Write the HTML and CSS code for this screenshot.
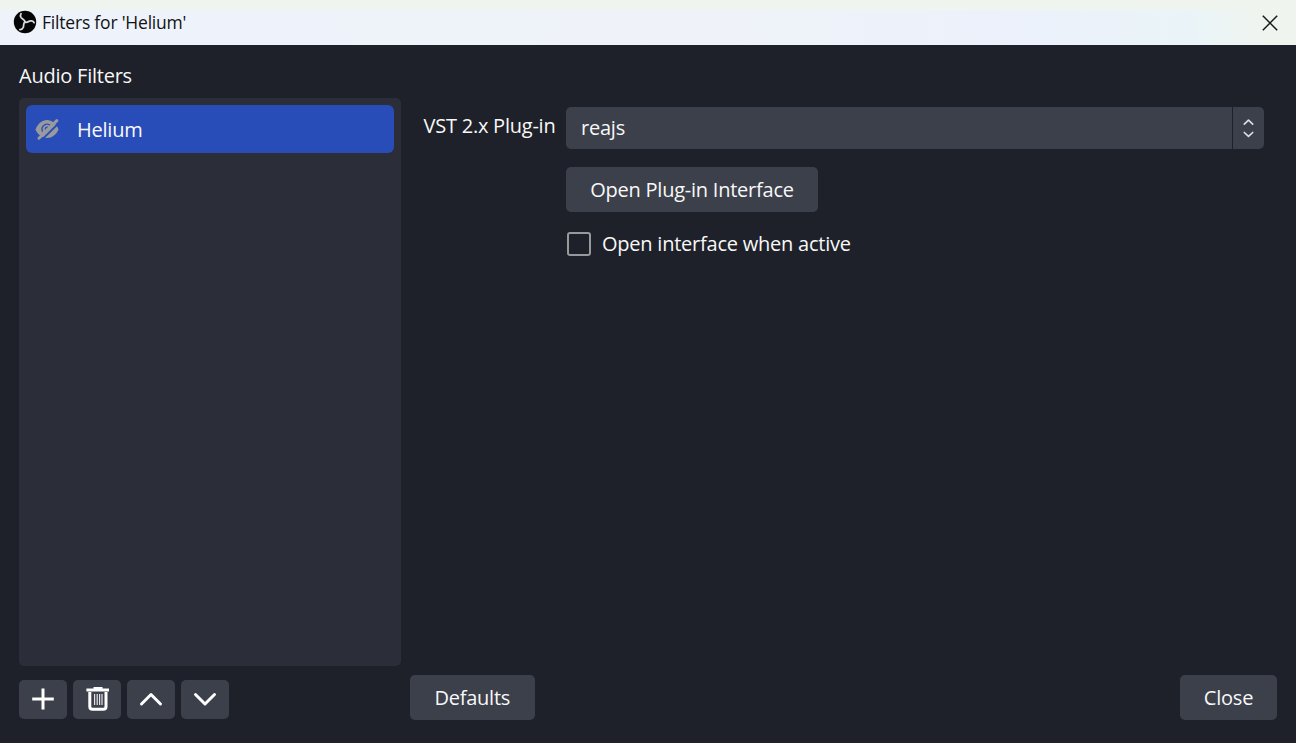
FILE: index.html
```html
<!DOCTYPE html>
<html lang="en">
<head>
<meta charset="utf-8">
<title>Filters for 'Helium'</title>
<link rel="stylesheet" href="styles.css">
</head>
<body>
<div class="window">
  <header class="titlebar">
    <svg class="logo" viewBox="0 0 24 24"><circle cx="12" cy="12" r="11.2" fill="#050506"/><g fill="none" stroke="#d5d8dd" stroke-width="1.8" stroke-linecap="round"><path d="M12 12.3C12.2 9.6 9.6 9.6 8.2 7.8C7.2 6.4 7.2 5 8 3.8"/><path d="M12 12.3C12.2 9.6 9.6 9.6 8.2 7.8C7.2 6.4 7.2 5 8 3.8" transform="rotate(120 12 12)"/><path d="M12 12.3C12.2 9.6 9.6 9.6 8.2 7.8C7.2 6.4 7.2 5 8 3.8" transform="rotate(240 12 12)"/></g></svg>
    <span class="title">Filters for 'Helium'</span>
    <svg class="dismiss" viewBox="0 0 16 16"><path d="M.8.8 15.2 15.2M15.2.8.8 15.2" fill="none" stroke="#16181b" stroke-width="1.5"/></svg>
  </header>
  <main class="content">
    <section class="sidebar">
      <h2 class="heading">Audio Filters</h2>
      <ul class="filters">
        <li class="filter">
          <svg class="eye" viewBox="0 0 24 21"><path d="M.5 10.5C3 4.5 7 1 12 1S21 4.5 23.5 10.5C21 16 17 19 12 19S3 16 .5 10.5Z" fill="#999a9d"/><path d="M7.6 12.6A5 5 0 0 1 15.6 6.8" fill="none" stroke="#284cb8" stroke-width="1.3"/><path d="M10.3 10.6A2 2 0 0 1 12.8 8.2" fill="none" stroke="#284cb8" stroke-width="1.3"/><path d="M6 21.6 24.2 3.6" stroke="#284cb8" stroke-width="1.9"/><path d="M4 19.2 21.8 1.6" stroke="#999a9d" stroke-width="3" stroke-linecap="round"/></svg>
          <span>Helium</span>
        </li>
      </ul>
      <div class="tools">
        <button class="tool" aria-label="Add"><svg viewBox="0 0 47 38"><path d="M24 8.5V29.5M13.2 19H34.8" stroke="#fefefe" stroke-width="3" fill="none"/></svg></button>
        <button class="tool" aria-label="Remove"><svg viewBox="0 0 47 38"><path d="M13.4 10H36M20.5 8.5H29.5" stroke="#fefefe" stroke-width="3" fill="none"/><path d="M16.8 12V26.5Q16.8 29.3 19.6 29.3H30.2Q33 29.3 33 26.5V12" stroke="#fefefe" stroke-width="3" fill="none"/><path d="M21.6 14V25M24.2 14V25M26.6 14V25M29 14V25" stroke="#e4e5e7" stroke-width="1.2" fill="none"/></svg></button>
        <button class="tool" aria-label="Move up"><svg viewBox="0 0 47 38"><path d="M14.5 24 24 14.5 33.5 24" stroke="#fefefe" stroke-width="3" stroke-linecap="round" stroke-linejoin="round" fill="none"/></svg></button>
        <button class="tool" aria-label="Move down"><svg viewBox="0 0 47 38"><path d="M14.5 14.5 24 24 33.5 14.5" stroke="#fefefe" stroke-width="3" stroke-linecap="round" stroke-linejoin="round" fill="none"/></svg></button>
      </div>
    </section>
    <section class="panel">
      <div class="form">
        <label class="label">VST 2.x Plug-in</label>
        <div class="select">
          <span class="value">reajs</span>
          <span class="spin"><svg viewBox="0 0 30 42"><path d="M11.3 17.1 15.5 13.2 19.7 17.1M11.3 25.5 15.5 29.4 19.7 25.5" fill="none" stroke="#dcdde0" stroke-width="1.7" stroke-linecap="round" stroke-linejoin="round"/></svg></span>
        </div>
        <button class="button open">Open Plug-in Interface</button>
        <label class="check"><span class="box"></span><span>Open interface when active</span></label>
      </div>
      <div class="footer">
        <button class="button defaults">Defaults</button>
        <button class="button close">Close</button>
      </div>
    </section>
  </main>
</div>
</body>
</html>
```

FILE: styles.css
```css
* { box-sizing: border-box; }
body { margin: 0; background: #1e2129; font-family: "Open Sans", "Noto Sans", sans-serif; font-size: 20px; letter-spacing: -0.23px; color: #f8f8f8; }
.window { width: 1296px; height: 743px; display: flex; flex-direction: column; overflow: hidden; }
.titlebar { height: 45px; flex: none; display: flex; align-items: center; padding: 0 18.5px 0 13px; color: #111214; background: linear-gradient(180deg, #eff5ee 0, #eff5ee 7px, rgba(239, 245, 238, 0) 13px), linear-gradient(90deg, #eef2fb 0, #eff3f9 55%, #ecf1fb 78%, #eaf4f8 92%, #f0f4ee 98%); }
.logo { width: 24px; height: 24px; margin-top: -1px; }
.title { margin: -1px 0 0 5px; font-size: 17.5px; letter-spacing: -0.2px; line-height: 24px; }
.dismiss { width: 16px; height: 16px; margin-left: auto; }
.content { flex: 1; display: flex; gap: 9px; padding: 16px 19px 23px; }
.sidebar { width: 382px; display: flex; flex-direction: column; }
.heading { margin: 0 0 7px; font-size: 20px; font-weight: 400; line-height: 30px; }
.filters { margin: 0; padding: 7px; list-style: none; height: 568px; border-radius: 5px; background: #2b2d38; }
.filter { height: 48px; display: flex; align-items: center; padding-left: 9px; gap: 18px; border-radius: 6px; background: #284cb8; }
.eye { width: 24px; height: 21px; }
.tools { display: flex; gap: 6.5px; margin-top: 14px; }
.tool { width: 47.5px; height: 38.5px; padding: 0; border: 0; border-radius: 5px; background: #3c404b; }
.tool svg { display: block; width: 47px; height: 38px; }
.panel { flex: 1; display: flex; flex-direction: column; justify-content: space-between; }
.form { display: grid; grid-template-columns: 132px 698px; column-gap: 11px; padding: 45.5px 0 0 13px; justify-items: start; }
.label { padding-left: 0.5px; line-height: 38px; white-space: nowrap; }
.select { width: 697.5px; height: 42px; display: flex; gap: 1.5px; }
.value { flex: 1; padding-left: 15px; line-height: 42px; border-radius: 5px 0 0 5px; background: #3c404b; }
.spin { width: 30.5px; border-radius: 0 5px 5px 0; background: #3c404b; }
.spin svg { display: block; width: 30px; height: 42px; }
.button { height: 45px; padding: 0; border: 0; border-radius: 5px; font: inherit; letter-spacing: inherit; color: inherit; background: #3c404b; }
.open { grid-column: 2; width: 252px; margin-top: 18px; }
.check { grid-column: 2; display: flex; align-items: center; gap: 11px; height: 28px; margin: 18px 0 0 1px; white-space: nowrap; }
.box { width: 24px; height: 24px; border: 2px solid #98999d; border-radius: 3px; }
.footer { display: flex; justify-content: space-between; }
.defaults { width: 124.5px; }
.close { width: 97px; }
```
